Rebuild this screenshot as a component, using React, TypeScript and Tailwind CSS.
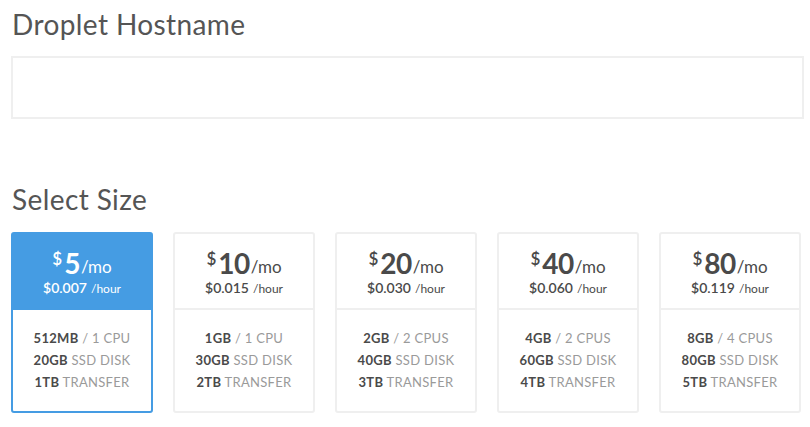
const sizes = [
  { price: "5", hourly: "$0.007", mem: "512MB", cpu: "1 CPU", disk: "20GB", transfer: "1TB", active: true },
  { price: "10", hourly: "$0.015", mem: "1GB", cpu: "1 CPU", disk: "30GB", transfer: "2TB" },
  { price: "20", hourly: "$0.030", mem: "2GB", cpu: "2 CPUS", disk: "40GB", transfer: "3TB" },
  { price: "40", hourly: "$0.060", mem: "4GB", cpu: "2 CPUS", disk: "60GB", transfer: "4TB" },
  { price: "80", hourly: "$0.119", mem: "8GB", cpu: "4 CPUS", disk: "80GB", transfer: "5TB" },
]

type Size = (typeof sizes)[number] & { active?: boolean }

function SizeCard({ size }: { size: Size }) {
  const active = !!size.active
  return (
    <div
      className={
        active
          ? "flex flex-col rounded-[3px] border-2 border-[#459ce3] bg-white"
          : "flex flex-col rounded-[3px] border-2 border-[#efefef] bg-white"
      }
    >
      {/* price */}
      <div
        className={
          active
            ? "h-[76px] flex flex-col items-center pt-[15px] bg-[#459ce3] text-white"
            : "h-[76px] flex flex-col items-center pt-[15px] border-b-2 border-[#efefef] text-[#4a4a4a]"
        }
      >
        <div className="flex items-start leading-none">
          <span className="text-[17px] font-semibold mt-[1px] mr-[2px]">$</span>
          <span className="text-[28px] font-bold tracking-[-0.5px] leading-[28px]">{size.price}</span>
          <span className="text-[17px] mt-[9px] ml-[1px]">/mo</span>
        </div>
        <div className="mt-[2px] leading-none">
          <span className="text-[14px] font-semibold">{size.hourly}</span>
          <span className="text-[12px] ml-[4px]">/hour</span>
        </div>
      </div>

      {/* specs */}
      <div className="flex flex-col items-center pt-[17px] pb-[18px] text-[13px] leading-[22px] tracking-[0.3px] uppercase text-[#9a9a9a]">
        <div>
          <span className="font-bold text-[#4a4a4a]">{size.mem}</span> / {size.cpu}
        </div>
        <div>
          <span className="font-bold text-[#4a4a4a]">{size.disk}</span> SSD DISK
        </div>
        <div>
          <span className="font-bold text-[#4a4a4a]">{size.transfer}</span> TRANSFER
        </div>
      </div>
    </div>
  )
}

export default function App() {
  return (
    <div className="w-[810px] h-[427px] bg-white pl-[11px] pr-[6px] font-['Lato','Open_Sans',sans-serif]">
      <h2 className="pt-[6px] text-[28px] leading-[36px] font-normal tracking-[0.4px] text-[#555555] pl-[1px]">
        Droplet Hostname
      </h2>
      <input
        type="text"
        className="mt-[14px] block w-[793px] h-[63px] border-2 border-[#efefef] outline-none px-4"
      />

      <h2 className="mt-[62px] text-[28px] leading-[36px] font-normal tracking-[0.4px] text-[#555555] pl-[1px]">
        Select Size
      </h2>
      <div className="mt-[15px] grid grid-cols-[repeat(5,142px)] gap-x-[20px]">
        {sizes.map((s) => (
          <SizeCard key={s.price} size={s} />
        ))}
      </div>
    </div>
  )
}
